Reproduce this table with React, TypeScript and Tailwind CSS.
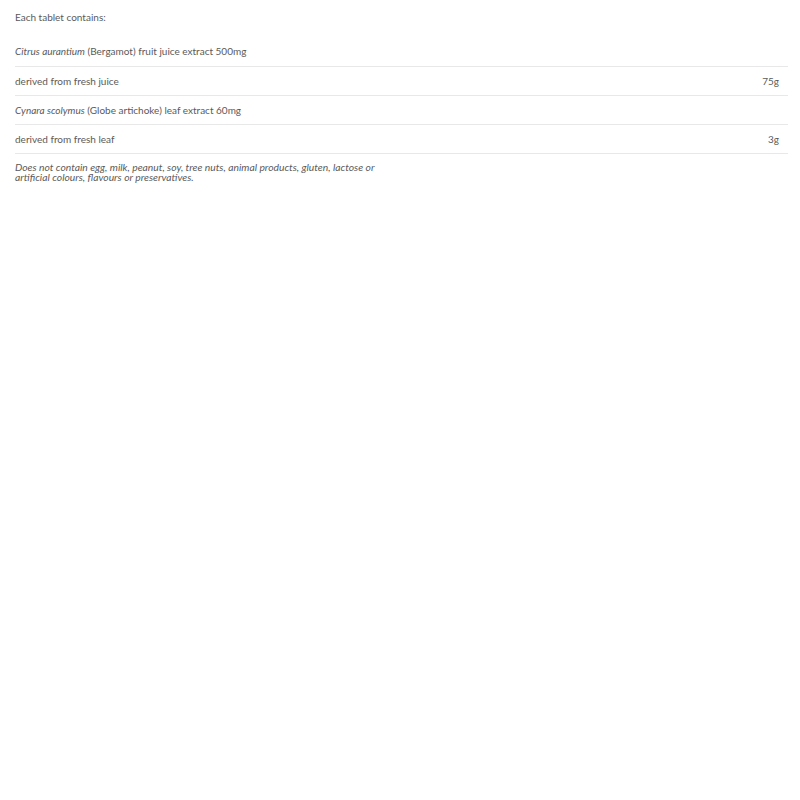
import React from 'react';

interface Row {
  label: React.ReactNode;
  amount?: string;
}

const rows: Row[] = [
  { label: <><em>Citrus aurantium</em> (Bergamot) fruit juice extract 500mg</> },
  { label: 'derived from fresh juice', amount: '75g' },
  { label: <><em>Cynara scolymus</em> (Globe artichoke) leaf extract 60mg</> },
  { label: 'derived from fresh leaf', amount: '3g' },
];

const App: React.FC = () => {
  return (
    <div className="min-h-screen bg-white px-[15px] pt-[11px] text-[10px] text-[#5a5a5a] font-['Lato','Noto_Sans',sans-serif]">
      <p className="leading-[12px]">Each tablet contains:</p>

      <table className="mt-[14px] w-[773px] border-collapse">
        <tbody>
          {rows.map((row, i) => (
            <tr key={i} className="border-b border-[#e8e8e8]">
              <td className="h-[29px] pt-[1px] align-middle">{row.label}</td>
              <td className="h-[29px] pr-[9px] pt-[1px] text-right align-middle">{row.amount}</td>
            </tr>
          ))}
        </tbody>
      </table>

      <p className="mt-[8px] text-[10.3px] italic leading-[10.5px]">
        Does not contain egg, milk, peanut, soy, tree nuts, animal products, gluten, lactose or
        <br />
        artificial colours, flavours or preservatives.
      </p>
    </div>
  );
};

export default App;
